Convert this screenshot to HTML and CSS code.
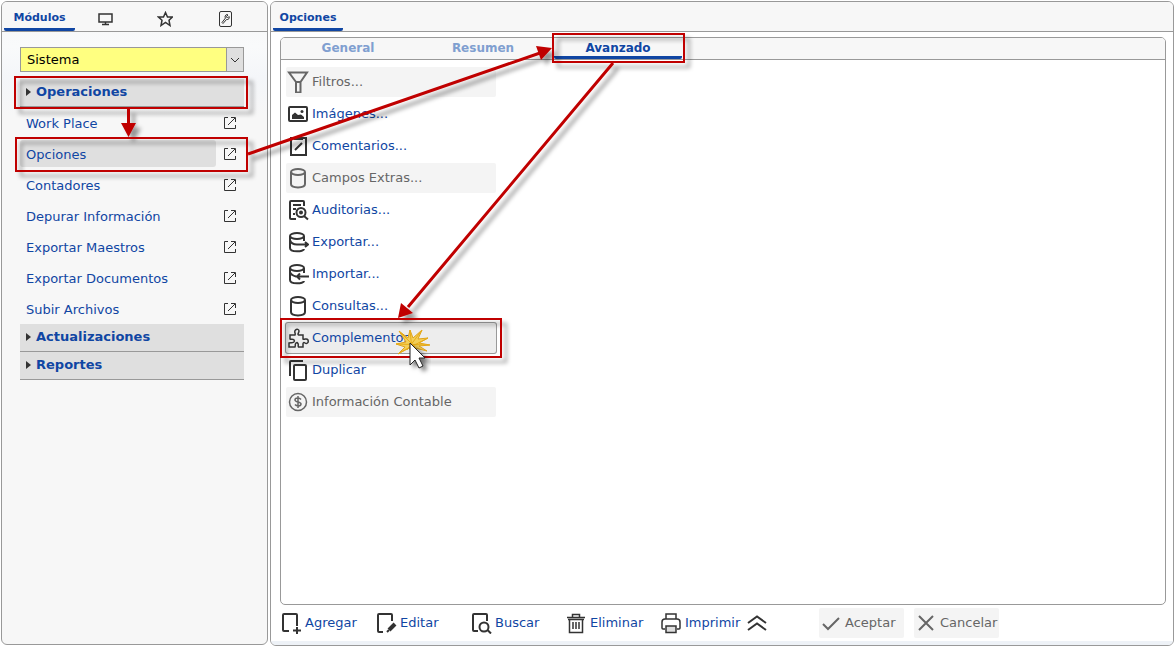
FILE: index.html
```
<!DOCTYPE html>
<html lang="es">
<head>
<meta charset="utf-8">
<title>Opciones</title>
<link rel="stylesheet" href="styles.css">
</head>
<body>
<svg class="defs" aria-hidden="true">
  <symbol id="open" viewBox="0 0 14 14"><path d="M5 1.500H1.500V12.500H12.500V9M5 9L12 2M8 1.500H12.500V6" /></symbol>
  <symbol id="db" viewBox="0 0 22 22"><ellipse cx="11" cy="5" rx="7" ry="3"/><path d="M4 5V17C4 21.500 18 21.500 18 17V5"/></symbol>
</svg>
<div class="app">
  <aside class="panel sidebar">
    <nav class="tabs" aria-label="Secciones">
      <button class="tab active">Módulos</button>
      <button class="tab" aria-label="Escritorio"><svg class="icon16" viewBox="0 0 16 16"><path d="M2 3H15V11H2ZM5 13.500H12M8.500 11V13"/></svg></button>
      <button class="tab" aria-label="Favoritos"><svg class="icon16" viewBox="0 0 16 16"><path d="M8.500 1.500L10.500 6H15.500L12 9.200L13 14.500L8.500 11.500L4 14.500L5 9.200L1.500 6H6.500Z"/></svg></button>
      <button class="tab" aria-label="Herramientas"><svg class="icon16 thin" viewBox="0 0 16 16"><rect x="2.500" y=".5" width="12" height="15" rx="1.500"/><path d="M10 3.500C8 4 7.500 6 8.500 7L5 11.500L6 12.500L9.500 8.500C11.500 9 13 7 12 5.500L10.500 7L9.300 5.800L11 4Z"/></svg></button>
    </nav>
    <div class="menu">
      <span class="module"><select aria-label="Módulo"><option>Sistema</option></select><span class="drop"><svg viewBox="0 0 16 23"><path d="M4 10L8 14L12 10"/></svg></span></span>
      <button class="group">Operaciones</button>
      <ul class="links">
        <li><a href="#">Work Place</a><button aria-label="Abrir Work Place"><svg><use href="#open"/></svg></button></li>
        <li class="current"><a href="#">Opciones</a><button aria-label="Abrir Opciones"><svg><use href="#open"/></svg></button></li>
        <li><a href="#">Contadores</a><button aria-label="Abrir Contadores"><svg><use href="#open"/></svg></button></li>
        <li><a href="#">Depurar Información</a><button aria-label="Abrir Depurar Información"><svg><use href="#open"/></svg></button></li>
        <li><a href="#">Exportar Maestros</a><button aria-label="Abrir Exportar Maestros"><svg><use href="#open"/></svg></button></li>
        <li><a href="#">Exportar Documentos</a><button aria-label="Abrir Exportar Documentos"><svg><use href="#open"/></svg></button></li>
        <li><a href="#">Subir Archivos</a><button aria-label="Abrir Subir Archivos"><svg><use href="#open"/></svg></button></li>
      </ul>
      <button class="group">Actualizaciones</button>
      <button class="group">Reportes</button>
    </div>
  </aside>

  <main class="panel main">
    <nav class="tabs"><button class="tab active">Opciones</button></nav>
    <section class="content">
      <nav class="subtabs">
        <button class="subtab">General</button>
        <button class="subtab">Resumen</button>
        <button class="subtab active">Avanzado</button>
      </nav>
      <div class="actions">
        <button class="action" disabled><svg viewBox="0 0 22 22"><path d="M2 1.500H20L13.500 11V21.500H9V11ZM9 11H13.500"/></svg>Filtros...</button>
        <button class="action"><svg viewBox="0 0 22 22"><rect x="2" y="4" width="18" height="14" rx="1"/><path class="solid" d="M5 16V12L8 9.500L11 12L14 11.500L17 14V16Z"/><circle class="solid" cx="15" cy="8.500" r="1.500"/></svg>Imágenes...</button>
        <button class="action"><svg viewBox="0 0 22 22"><path d="M4 3H19V20H4ZM8 15L15 8"/><path class="solid" d="M7 5V2H9.500L11.500 0L13.500 2H16V5Z"/></svg>Comentarios...</button>
        <button class="action" disabled><svg><use href="#db"/></svg>Campos Extras...</button>
        <button class="action"><svg viewBox="0 0 22 22"><path d="M9 20H4Q3 20 3 19V3Q3 2 4 2H16Q17 2 17 3V7M6 6H14M6 10H9M6 15H8M17 17L21 20.500"/><circle cx="14" cy="13.500" r="4.500"/><circle cx="14" cy="13.500" r="1"/></svg>Auditorias...</button>
        <button class="action"><svg viewBox="0 0 22 22"><ellipse cx="10" cy="5" rx="7" ry="3"/><path d="M3 5V17C3 21.500 17 21 17 18M17 5V10M3 9C4 12.500 7 13.500 10 13.500H21M18 11L21 13.500L18 16"/></svg>Exportar...</button>
        <button class="action"><svg viewBox="0 0 22 22"><ellipse cx="10" cy="5" rx="7" ry="3"/><path d="M3 5V17C3 21.500 17 21 17 18M17 5V10M3 9C4 12 7 13 9 13.500H22M13 10.500L10 13.500L13 16.500"/></svg>Importar...</button>
        <button class="action"><svg><use href="#db"/></svg>Consultas...</button>
        <button class="action focused"><svg class="puzzle" viewBox="0 0 22 22"><path d="M3 8H8C9 6 6.500 5 8.500 3C10 1.500 12 2.500 12 4C12 6 10 7 11.500 8H16V12C18 13 19.500 10.500 21 13C22 16 19.500 17 18 16C16.500 15 16 16 16 17V20H11.500C10.500 18 12.500 17 10 15.500C7 16 9 18 8 20H2V16C4 15 7 17 7.500 14C7 11 4 13 3 12Z"/></svg>Complementos</button>
        <button class="action"><svg viewBox="0 0 22 22"><path d="M3 17V3Q3 2 4 2H16"/><rect x="7" y="6" width="12" height="15" rx="1"/></svg>Duplicar</button>
        <button class="action" disabled><svg class="medium" viewBox="0 0 22 22"><circle cx="11" cy="11" r="8.500"/><path d="M14 8.500C12.500 6.500 8 6.500 8 9C8 11.500 14 10.500 14 13C14 15.500 9.500 15.500 8 13.500M11 5V17"/></svg>Información Contable</button>
      </div>
    </section>
    <footer class="toolbar">
      <button class="tool"><svg viewBox="0 0 22 22"><path d="M9 19H4Q3 19 3 18V3Q3 2 4 2H16Q17 2 17 3V14M17 15V22M13 18.500H21"/></svg>Agregar</button>
      <button class="tool"><svg viewBox="0 0 22 22"><path d="M8 20H4Q3 20 3 19V3Q3 2 4 2H16Q17 2 17 3V9"/><path class="heavy" d="M20 12L14 18"/><path d="M14 18L12 20"/></svg>Editar</button>
      <button class="tool"><svg viewBox="0 0 22 22"><path d="M8 19H4Q3 19 3 18V3Q3 2 4 2H16Q17 2 17 3V9M17.500 18L21 21.500"/><circle cx="14" cy="15" r="4.500"/></svg>Buscar</button>
      <button class="tool"><svg class="medium" viewBox="0 0 22 22"><path d="M2 5.500H20M7.500 5V2.500H14.500V5M4.500 7.500V20.500H17.500V7.500M8 10V17M11 10V17M14 10V17M3 7.500H19"/></svg>Eliminar</button>
      <button class="tool"><svg class="medium" viewBox="0 0 22 22"><path d="M6 7V2H16V7M5 17H3Q2 17 2 16V10Q2 7 5 7H17Q20 7 20 10V16Q20 17 19 17H17"/><path class="paper" d="M6 14H16V20.500H6Z"/></svg>Imprimir</button>
      <button class="more" aria-label="Más"><svg viewBox="0 0 22 22"><path d="M2 11L11 4.500L20 11M2 18L11 11.500L20 18"/></svg></button>
      <button class="tool" disabled><svg viewBox="0 0 22 22"><path d="M3 12L8 17L19 6"/></svg>Aceptar</button>
      <button class="tool" disabled><svg viewBox="0 0 22 22"><path d="M4 4L18 18M18 4L4 18"/></svg>Cancelar</button>
    </footer>
  </main>
</div>

<svg class="callouts" viewBox="0 0 1175 646" aria-hidden="true">
  <defs><filter id="shade" x="-10%" y="-10%" width="130%" height="130%"><feDropShadow dx="5" dy="5" stdDeviation="2" flood-color="#000" flood-opacity=".4"/></filter>
  <filter id="pointer" x="-20%" y="-20%" width="160%" height="160%"><feDropShadow dx="4" dy="3" stdDeviation="2" flood-opacity=".5"/></filter></defs>
  <g filter="url(#shade)">
    <g class="frames">
      <rect x="15" y="77" width="232" height="31"/>
      <rect x="16" y="138" width="231" height="33"/>
      <rect x="553" y="34" width="131" height="28"/>
      <rect x="281" y="319" width="220" height="38"/>
    </g>
    <path class="line" d="M128.500 108V126M248 154L540 53M613 63L408 307"/>
    <path class="head" d="M121 123H136L128.500 137ZM536 46L552 48L541 60ZM401 303L413 313L398 318Z"/>
  </g>
  <path class="burst" d="M399 331L408 338L410 330L413 338L422 330L418 339L428 338L419 343L430 345L419 346L427 351L415 348L412 353L409 348L398 354L405 347L396 344L406 342Z"/>
  <path class="rays" d="M399 331L415 347M410 330L412 350M422 330L407 350M428 338L399 353M396 344L429 345"/>
  <path class="cursor" filter="url(#pointer)" d="M410 343V365L415 360L419 368L423 366L419 358H425Z"/>
</svg>
</body>
</html>
```
FILE: styles.css
```
* { box-sizing: border-box; }
body {
  margin: 0;
  font: 13px/18px "DejaVu Sans", Verdana, sans-serif;
  color: #1046a3;
  background: #fff;
}
button { font: inherit; color: inherit; background: none; border: 0; margin: 0; padding: 0; }
a { color: inherit; text-decoration: none; }
svg { fill: none; stroke: #333; flex: none; }
.defs { display: none; }

.app { position: relative; display: flex; gap: 2px; height: 100vh; min-height: 420px; padding: 1px 1px 0; }
.panel { display: flex; flex-direction: column; border: 1px solid #999; border-radius: 6px; overflow: hidden; }
.sidebar { width: 267px; flex: none; margin-bottom: 1px; background: linear-gradient(#f7f7f7 0, #f9fafb 45px, #f4f6f9 75px, #f7f7f7 115px); }
.main { flex: 1; min-width: 0; background: #fff; }

.tabs { display: flex; height: 30px; flex: none; padding: 0 2px; border-bottom: 1px solid #999; background: #f7f7f7; }
.tab { display: flex; align-items: center; justify-content: center; width: 60px; padding-top: 4px; font-size: 11px; font-weight: bold; }
.tab.active { width: 71px; padding-top: 6px; border-bottom: 3px solid #1046a3; border-radius: 2px; }
.main .tab.active { width: 70px; }
.icon16 { width: 16px; height: 16px; stroke-width: 1.500; }
.icon16.thin { stroke-width: 1; }

.menu { display: flex; flex-direction: column; padding: 15px 23px 0 18px; }
.module { display: flex; position: relative; margin-bottom: 7px; }
.module select { appearance: none; width: 100%; height: 25px; padding: 0 6px; font: inherit; color: #000; background: #ffff80; border: 1px solid #999; border-radius: 0; }
.drop { position: absolute; right: 1px; top: 1px; width: 17px; height: 23px; background: #dfdfdf; border-left: 1px solid #999; pointer-events: none; }
.drop svg { width: 16px; height: 23px; }
.group { display: flex; align-items: center; gap: 5px; height: 28px; padding: 0 6px 2px; font-weight: bold; background: #dfdfdf; border-bottom: 1px solid #999; }
.group::before { content: ""; border: 4px solid transparent; border-left: 5px solid #333; border-right: 0; }
.links { list-style: none; margin: 0; padding: 0; }
.links li { display: flex; align-items: center; height: 31px; gap: 7px; }
.links a { flex: 1; padding: 6px 6px 3px; border-radius: 3px; }
.links .current a { background: #dfdfdf; }
.links button { display: flex; width: 21px; }
.links svg { width: 14px; height: 14px; }

.content { flex: 1; min-height: 0; display: flex; flex-direction: column; margin: 5px 7px 0 9px; border: 1px solid #999; border-radius: 5px; overflow: hidden; }
.subtabs { display: flex; gap: 7px; flex: none; height: 22px; padding-left: 3px; background: #f7f7f7; border-bottom: 1px solid #999; }
.subtab { width: 128px; font-size: 12px; font-weight: bold; line-height: 20px; color: #809fd0; border-bottom: 3px solid transparent; border-radius: 2px; }
.subtab.active { color: #1046a3; border-color: #1046a3; }
.actions { display: flex; flex-direction: column; gap: 2px; width: 222px; padding: 7px 7px 0 5px; }
.action, .tool { display: flex; align-items: center; gap: 3px; height: 30px; padding: 0 1px; border-radius: 2px; white-space: nowrap; }
.action svg, .tool svg, .more svg { width: 22px; height: 22px; stroke-width: 2; }
svg .solid { fill: #333; stroke: none; }
svg .heavy { stroke-width: 4; }
.action .puzzle, .action .medium, .tool .medium { stroke-width: 1.500; }
.paper { fill: #ddd; }
button:disabled { color: #666; background: #f4f4f4; }
button:disabled svg { stroke: #666; }
.focused { background: #ededed; box-shadow: 0 0 0 1px #999; }

.toolbar { display: flex; flex: none; gap: 10px; padding: 3px 8px 7px; background: linear-gradient(#fff 36px, #eef2f7 36px); }
.tool { width: 85px; padding-bottom: 1px; }
.more { display: flex; align-items: center; justify-content: center; width: 26px; margin-left: -10px; margin-right: 39px; }

.callouts { position: absolute; left: 0; top: 0; width: 1175px; height: 646px; pointer-events: none; }
.frames { stroke: #c00000; stroke-width: 2; }
.line { stroke: #c00000; stroke-width: 3; }
.head { fill: #c00000; stroke: none; }
.burst { fill: #f3cf58; stroke: #dfa31a; stroke-width: 1; }
.rays { stroke: #e9ad17; stroke-width: 1; }
.cursor { fill: #fff; stroke: #222; stroke-width: 1; }
```
